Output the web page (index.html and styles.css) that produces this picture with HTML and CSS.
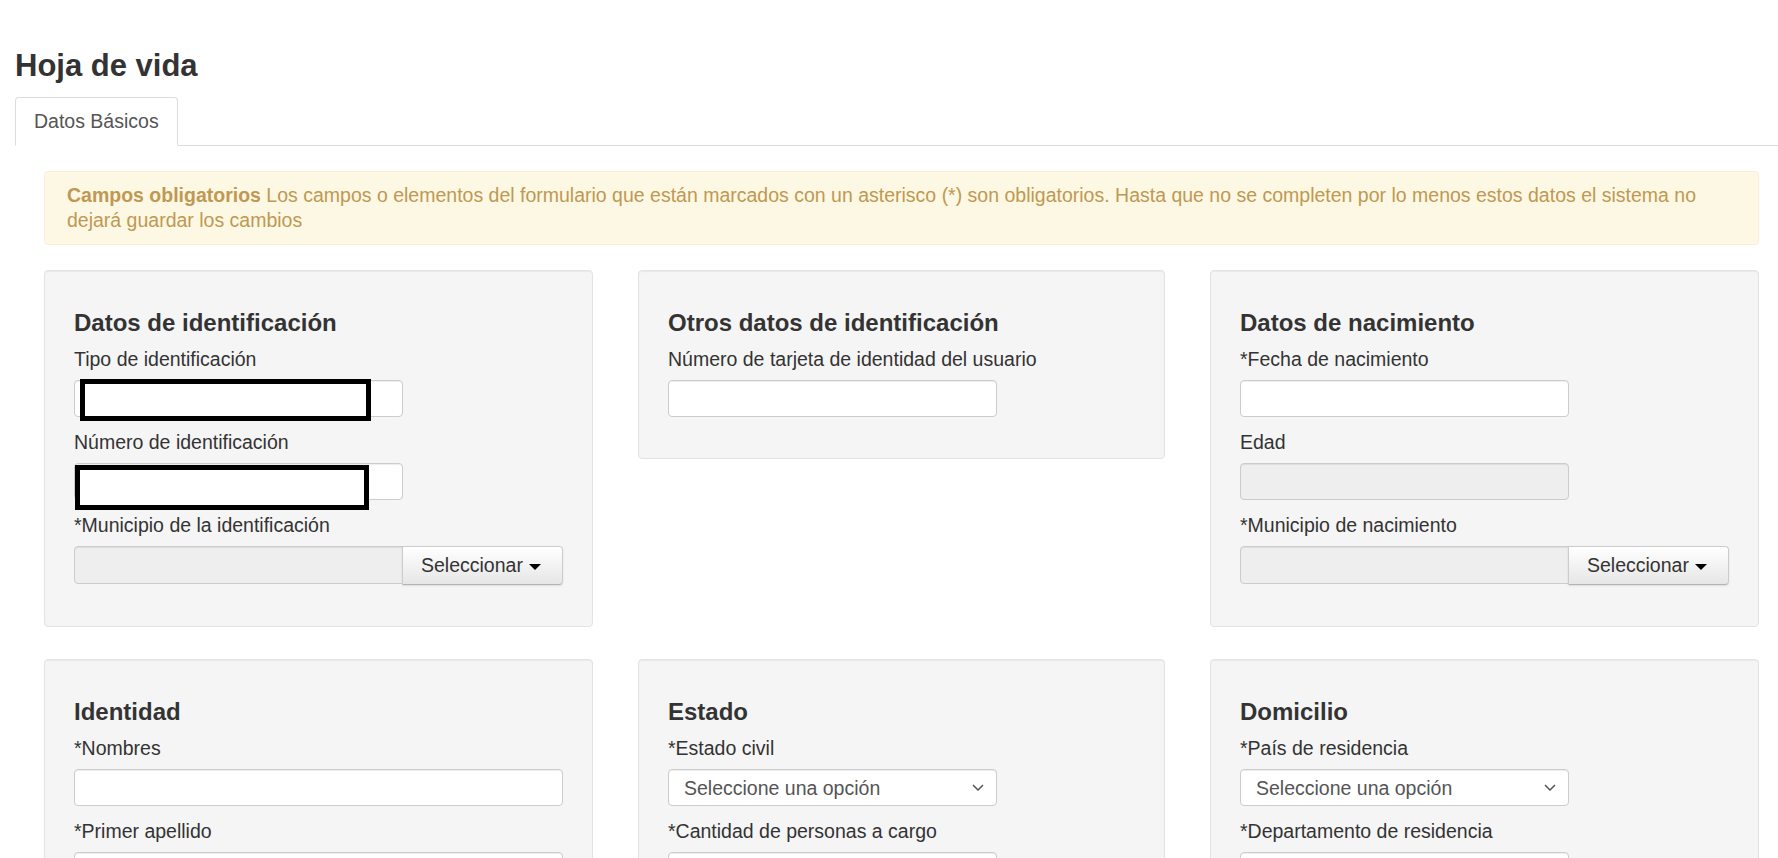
FILE: index.html
```html
<!DOCTYPE html>
<html lang="es">
<head>
    <meta charset="UTF-8">
    <meta name="viewport" content="width=device-width, initial-scale=1.0">
    <title>Hoja de vida</title>
    <link rel="stylesheet" href="styles.css">
</head>
<body>
    <div class="page">
        <h3 class="page-title">Hoja de vida</h3>

        <ul class="tabs">
            <li class="tab active">Datos Básicos</li>
        </ul>

        <div class="tab-pane">
            <div class="alert">
                <strong>Campos obligatorios</strong> Los campos o elementos del formulario que están marcados con un asterisco (*) son obligatorios. Hasta que no se completen por lo menos estos datos el sistema no dejará guardar los cambios
            </div>

            <div class="panels">
                <!-- Fila 1 -->
                <section class="well">
                    <h4 class="well-title">Datos de identificación</h4>
                    <div class="form-group">
                        <label>Tipo de identificación</label>
                        <div class="field">
                            <input type="text" class="input short">
                            <span class="redact redact-1"></span>
                        </div>
                    </div>
                    <div class="form-group">
                        <label>Número de identificación</label>
                        <div class="field">
                            <input type="text" class="input short">
                            <span class="redact redact-2"></span>
                        </div>
                    </div>
                    <div class="form-group">
                        <label>*Municipio de la identificación</label>
                        <div class="input-group">
                            <input type="text" class="input short" disabled>
                            <button class="btn">Seleccionar <span class="caret"></span></button>
                        </div>
                    </div>
                </section>

                <section class="well">
                    <h4 class="well-title">Otros datos de identificación</h4>
                    <div class="form-group">
                        <label>Número de tarjeta de identidad del usuario</label>
                        <input type="text" class="input short">
                    </div>
                </section>

                <section class="well">
                    <h4 class="well-title">Datos de nacimiento</h4>
                    <div class="form-group">
                        <label>*Fecha de nacimiento</label>
                        <input type="text" class="input short">
                    </div>
                    <div class="form-group">
                        <label>Edad</label>
                        <input type="text" class="input short" disabled>
                    </div>
                    <div class="form-group">
                        <label>*Municipio de nacimiento</label>
                        <div class="input-group">
                            <input type="text" class="input short" disabled>
                            <button class="btn">Seleccionar <span class="caret"></span></button>
                        </div>
                    </div>
                </section>

                <!-- Fila 2 -->
                <section class="well">
                    <h4 class="well-title">Identidad</h4>
                    <div class="form-group">
                        <label>*Nombres</label>
                        <input type="text" class="input">
                    </div>
                    <div class="form-group">
                        <label>*Primer apellido</label>
                        <input type="text" class="input">
                    </div>
                </section>

                <section class="well">
                    <h4 class="well-title">Estado</h4>
                    <div class="form-group">
                        <label>*Estado civil</label>
                        <div class="select-wrap">
                            <select class="input select">
                                <option>Seleccione una opción</option>
                            </select>
                            <svg class="chevron" viewBox="0 0 12 7"><polyline points="1,1 6,6 11,1"/></svg>
                        </div>
                    </div>
                    <div class="form-group">
                        <label>*Cantidad de personas a cargo</label>
                        <input type="text" class="input short">
                    </div>
                </section>

                <section class="well">
                    <h4 class="well-title">Domicilio</h4>
                    <div class="form-group">
                        <label>*País de residencia</label>
                        <div class="select-wrap">
                            <select class="input select">
                                <option>Seleccione una opción</option>
                            </select>
                            <svg class="chevron" viewBox="0 0 12 7"><polyline points="1,1 6,6 11,1"/></svg>
                        </div>
                    </div>
                    <div class="form-group">
                        <label>*Departamento de residencia</label>
                        <input type="text" class="input short">
                    </div>
                </section>
            </div>
        </div>
    </div>
</body>
</html>
```

FILE: styles.css
```css
* {
    box-sizing: border-box;
}

body {
    margin: 0;
    font-family: "Liberation Sans", Arial, Helvetica, sans-serif;
    font-size: 19.5px;
    color: #333;
    background: #fff;
    overflow: hidden;
}

.page {
    padding-left: 15px;
}

.page-title {
    font-size: 31px;
    font-weight: bold;
    line-height: 34px;
    margin: 49px 0 14px;
}

/* Tabs */
.tabs {
    display: flex;
    list-style: none;
    margin: 0;
    padding: 0;
    border-bottom: 1px solid #ddd;
}

.tab {
    height: 49px;
    line-height: 47px;
    padding: 0 18px;
    margin-bottom: -1px;
    border: 1px solid #ddd;
    border-bottom-color: transparent;
    border-radius: 4px 4px 0 0;
    background: #fff;
    color: #555;
}

.tab-pane {
    padding: 25px 19px 0 29px;
}

/* Alert */
.alert {
    padding: 11px 22px;
    margin-bottom: 25px;
    line-height: 25px;
    background: #fcf8e3;
    border: 1px solid #fbeed5;
    border-radius: 4px;
    color: #c09853;
}

/* Panels */
.panels {
    display: grid;
    grid-template-columns: repeat(3, 1fr);
    column-gap: 45px;
    row-gap: 32px;
    align-items: start;
}

.well {
    background: #f5f5f5;
    border: 1px solid #e3e3e3;
    border-radius: 4px;
    box-shadow: inset 0 1px 1px rgba(0, 0, 0, 0.05);
    padding: 39px 29px 28px;
}

.well-title {
    font-size: 24px;
    font-weight: bold;
    line-height: 26px;
    margin: 0 0 11px;
}

.form-group {
    margin-bottom: 13px;
}

label {
    display: block;
    line-height: 24px;
    margin-bottom: 9px;
}

.input {
    display: block;
    width: 100%;
    height: 37px;
    padding: 0 16px;
    font: inherit;
    color: #555;
    background: #fff;
    border: 1px solid #ccc;
    border-radius: 4px;
    box-shadow: inset 0 1px 1px rgba(0, 0, 0, 0.075);
}

.input.short {
    width: 329px;
}

.input:disabled {
    background: #eee;
}

/* Redacted values */
.field {
    position: relative;
}

.redact {
    position: absolute;
    background: #fff;
    border: 5px solid #000;
}

.redact-1 {
    left: 6px;
    top: -1px;
    width: 291px;
    height: 42px;
}

.redact-2 {
    left: 1px;
    top: 2px;
    width: 294px;
    height: 45px;
}

/* Input group with button */
.input-group {
    display: flex;
}

.input-group .input {
    flex: none;
    height: 38px;
    border-radius: 4px 0 0 4px;
}

.btn {
    flex: none;
    width: 161px;
    height: 39px;
    margin-left: -1px;
    padding: 0 18px;
    font: inherit;
    color: #333;
    text-align: left;
    background: linear-gradient(to bottom, #fff 0%, #e6e6e6 100%);
    border: 1px solid #ccc;
    border-bottom-color: #b3b3b3;
    border-radius: 0 4px 4px 0;
    box-shadow: inset 0 1px 0 rgba(255, 255, 255, 0.2), 0 1px 2px rgba(0, 0, 0, 0.1);
}

.caret {
    display: inline-block;
    width: 0;
    height: 0;
    margin-left: 1px;
    vertical-align: middle;
    border-top: 6px solid #000;
    border-left: 6px solid transparent;
    border-right: 6px solid transparent;
}

/* Select */
.select-wrap {
    position: relative;
    width: 329px;
}

.select {
    appearance: none;
    -webkit-appearance: none;
    padding-left: 15px;
}

.chevron {
    position: absolute;
    right: 13px;
    top: 15px;
    width: 12px;
    height: 7px;
    fill: none;
    stroke: #555;
    stroke-width: 1.5;
    pointer-events: none;
}
```
